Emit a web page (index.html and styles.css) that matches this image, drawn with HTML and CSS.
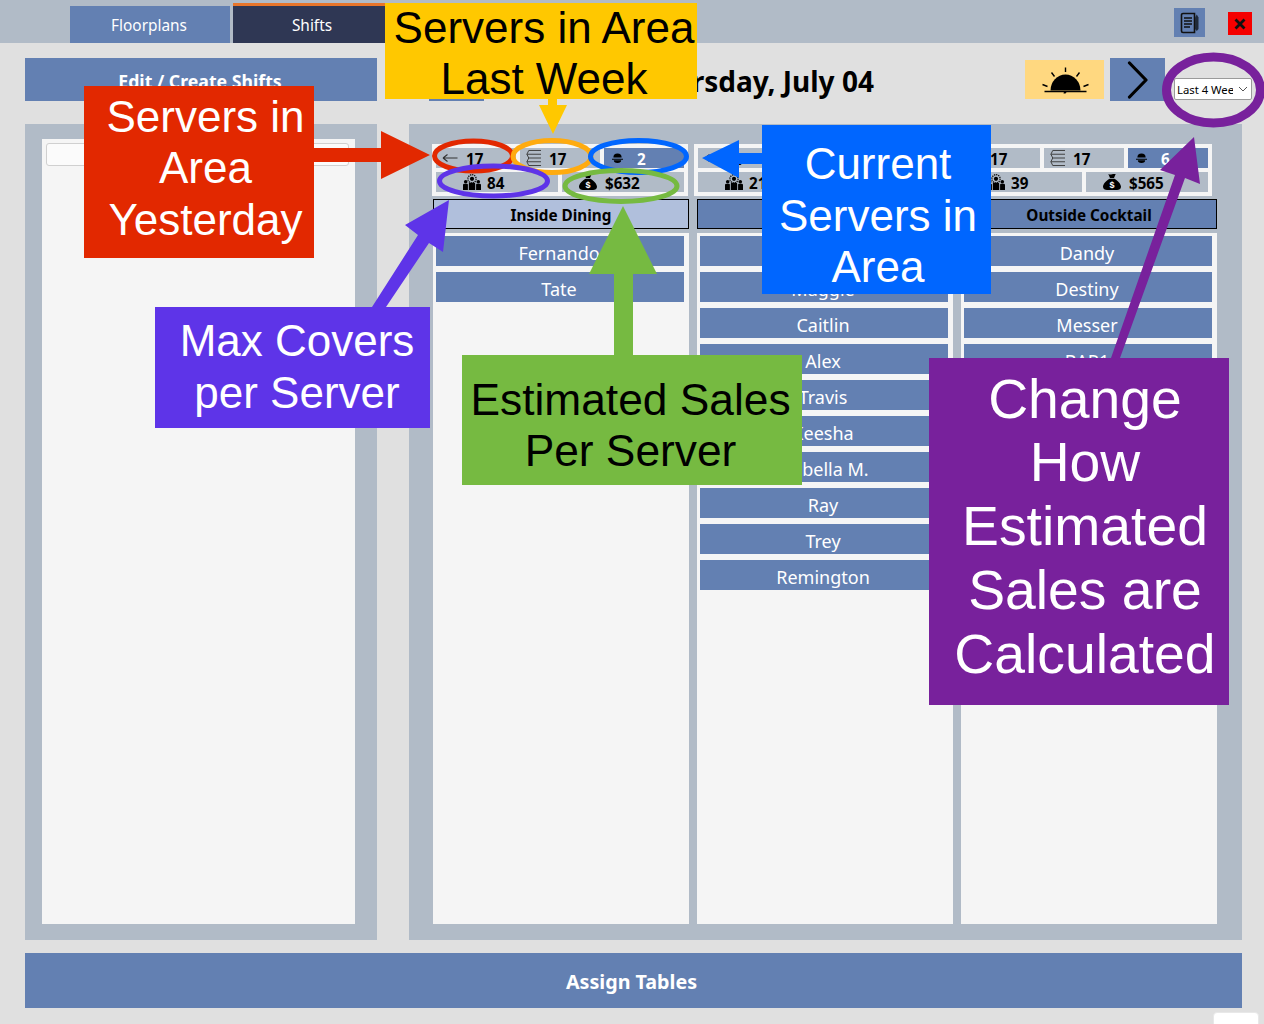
FILE: index.html
```html
<!DOCTYPE html>
<html lang="en">
<head>
<meta charset="utf-8">
<title>Shifts</title>
<link rel="stylesheet" href="styles.css">
</head>
<body>
<svg class="sprite" aria-hidden="true">
  <symbol id="i-back" viewBox="0 0 16 14"><path d="M15.500 7H1M1 7l4.500-3.500M1 7l4.500 3.500" fill="none" stroke="#333" stroke-width="1.100"/></symbol>
  <symbol id="i-list" viewBox="0 0 17 18"><path d="M4 1h13M2 5h15M4 9h13M2 13h15M4 17h13M4 1 2 5l2 4-2 4 2 4" fill="none" stroke="#3a3a3a" stroke-width="1"/></symbol>
  <symbol id="i-cloche" viewBox="0 0 12 12"><path d="M1.500 5a4.500 4.500 0 0 1 9 0zM0 6.300h12v1H0zM2 8h8a4 3 0 0 1-8 0z" fill="#000"/></symbol>
  <symbol id="i-people" viewBox="0 0 18 16"><circle cx="9" cy="4.800" r="4.100" fill="none" stroke="#111" stroke-width="1.300" stroke-dasharray="1.300 .8"/><circle cx="9" cy="4.800" r="2.100"/><circle cx="2.700" cy="7.700" r="1.800"/><circle cx="15.300" cy="7.700" r="1.800"/><path d="M0 16v-5q0-1.300 1.300-1.300h2.800q.8 0 .8 1V16zM13.100 16v-5.300q0-1 .8-1h2.800q1.300 0 1.300 1.300v5zM5.800 16V9.800q0-1 1-1h4.400q1 0 1 1V16z"/></symbol>
  <symbol id="i-bag" viewBox="0 0 18 16"><path d="M5.300 0q1.800.9 3.700.3t3.700-.3L11 4H7zM6.600 4.800h4.800C15 7 18 10 18 12.800 18 15.300 16 16 14 16H4C2 16 0 15.300 0 12.800 0 10 3 7 6.600 4.800z"/><text x="9" y="14" class="bag-sign">$</text></symbol>
</svg>

<div class="page">
  <header class="topbar">
    <nav class="tabs">
      <a class="tab">Floorplans</a>
      <a class="tab tab-active">Shifts</a>
    </nav>
    <div class="top-actions">
      <button class="note-btn" aria-label="Notes">
        <svg width="20" height="22" viewBox="0 0 20 22"><path d="M3 1.500h11.500v19H3A1.500 1.500 0 0 1 1.500 19V3A1.500 1.500 0 0 1 3 1.500z" fill="none" stroke="#111" stroke-width="1.600"/><path d="M4 6h8M4 9h8M4 12h8M4 15h6" stroke="#111" stroke-width="1.500"/><path d="M15 5.500 16.800 2.500l1.700 3V17l-1.700 2-1.800-2z" fill="#1f2a3a"/></svg>
      </button>
      <button class="close-btn" aria-label="Close">
        <svg width="12" height="12" viewBox="0 0 12 12"><path d="M1.500 1.500l9 9M10.500 1.500l-9 9" stroke="#111" stroke-width="2.800"/></svg>
      </button>
    </div>
  </header>

  <section class="toolbar">
    <button class="edit-btn"><span>Edit / Create Shifts</span></button>
    <button class="nav-btn nav-prev" aria-label="Previous day"></button>
    <h1 class="date">Thursday, July 04</h1>
    <button class="sun-btn" aria-label="Day part">
      <svg width="48" height="28" viewBox="0 0 48 28"><path d="M9.500 24.500a15 16 0 0 1 30 0z" fill="#000"/><path d="M3.500 25.500h42" stroke="#000" stroke-width="1.300"/><path d="M23 25.500h3l-1.500 2h-2z" fill="#000"/><path d="M24.500 1.500V6M10.500 6.500l3 4M38.500 6.500l-3 4M1.500 18.500l5 2M47.500 18.500l-5 2" stroke="#000" stroke-width="1.400"/></svg>
    </button>
    <button class="nav-btn nav-next" aria-label="Next day">
      <svg width="24" height="38" viewBox="0 0 24 38"><path d="M3.500 2 20 19 3.500 36" fill="none" stroke="#000" stroke-width="3.200" stroke-linecap="round" stroke-linejoin="round"/></svg>
    </button>
    <div class="range-select">
      <span class="range-text">Last 4 Weeks</span>
      <svg width="10" height="6" viewBox="0 0 10 6"><path d="M1 1l4 4 4-4" fill="none" stroke="#555"/></svg>
    </div>
  </section>

  <main class="workspace">
    <aside class="side-panel">
      <div class="side-inner">
        <div class="search-box"></div>
      </div>
    </aside>

    <section class="area-panel">
      <div class="stats-row">
        <div class="stats">
          <div class="stat-line">
            <div class="stat stat-back"><svg class="ic-back"><use href="#i-back"/></svg><b>17</b></div>
            <div class="stat stat-list"><svg class="ic-list"><use href="#i-list"/></svg><b>17</b></div>
            <div class="stat stat-now"><svg class="ic-cloche"><use href="#i-cloche"/></svg><b>2</b></div>
          </div>
          <div class="stat-line">
            <div class="stat stat-covers"><svg class="ic-people"><use href="#i-people"/></svg><b>84</b></div>
            <div class="stat stat-sales"><svg class="ic-bag"><use href="#i-bag"/></svg><b>$632</b></div>
          </div>
        </div>
        <div class="stats">
          <div class="stat-line">
            <div class="stat stat-back"><svg class="ic-back"><use href="#i-back"/></svg><b>17</b></div>
            <div class="stat stat-list"><svg class="ic-list"><use href="#i-list"/></svg><b>17</b></div>
            <div class="stat stat-now"><svg class="ic-cloche"><use href="#i-cloche"/></svg><b>9</b></div>
          </div>
          <div class="stat-line">
            <div class="stat stat-covers"><svg class="ic-people"><use href="#i-people"/></svg><b>210</b></div>
            <div class="stat stat-sales"><svg class="ic-bag"><use href="#i-bag"/></svg><b>$1580</b></div>
          </div>
        </div>
        <div class="stats">
          <div class="stat-line">
            <div class="stat stat-back"><svg class="ic-back"><use href="#i-back"/></svg><b>17</b></div>
            <div class="stat stat-list"><svg class="ic-list"><use href="#i-list"/></svg><b>17</b></div>
            <div class="stat stat-now"><svg class="ic-cloche"><use href="#i-cloche"/></svg><b>6</b></div>
          </div>
          <div class="stat-line">
            <div class="stat stat-covers"><svg class="ic-people"><use href="#i-people"/></svg><b>39</b></div>
            <div class="stat stat-sales"><svg class="ic-bag"><use href="#i-bag"/></svg><b>$565</b></div>
          </div>
        </div>
      </div>

      <div class="columns">
        <div class="column">
          <h2 class="col-head col-head-active"><span>Inside Dining</span></h2>
          <ul class="servers">
            <li>Fernando</li>
            <li>Tate</li>
          </ul>
        </div>
        <div class="column">
          <h2 class="col-head"><span>Main Bar</span></h2>
          <ul class="servers">
            <li>Jordan</li>
            <li>Maggie</li>
            <li>Caitlin</li>
            <li>Alex</li>
            <li>Travis</li>
            <li>Keesha</li>
            <li>Isabella M.</li>
            <li>Ray</li>
            <li>Trey</li>
            <li>Remington</li>
          </ul>
        </div>
        <div class="column">
          <h2 class="col-head"><span>Outside Cocktail</span></h2>
          <ul class="servers">
            <li>Dandy</li>
            <li>Destiny</li>
            <li>Messer</li>
            <li>BAR1</li>
          </ul>
        </div>
      </div>
    </section>
  </main>

  <footer class="footer">
    <button class="assign-btn">Assign Tables</button>
  </footer>
  <div class="corner-tab"></div>
</div>

<svg class="arrows" width="1264" height="1024" viewBox="0 0 1264 1024" aria-hidden="true">
  <polygon fill="#E22800" points="314,148 381,148 381,131 430,155 381,179 381,162 314,162"/>
  <polygon fill="#FFC800" points="548,99 557,99 557,105 567,105 553,134 539,105 548,105"/>
  <polygon fill="#0066FF" points="762,153 739,153 739,140 702,158 739,178 739,164 762,164"/>
  <polygon fill="#76BA41" points="614,355 614,274 589,274 623,206 657,274 633,274 633,355"/>
  <polygon fill="#5E34E8" points="372,307 418,235 405,225 449,200 443,252 429,243 386,307"/>
  <polygon fill="#78219C" points="1111,358 1175,175 1160,170 1194,137 1200,184 1185,178 1120,358"/>
  <g fill="none">
    <ellipse cx="473.500" cy="156" rx="39" ry="15" stroke="#E22800" stroke-width="5"/>
    <ellipse cx="552" cy="156.500" rx="39" ry="16" stroke="#FFAB0F" stroke-width="5"/>
    <ellipse cx="638.500" cy="156.500" rx="48" ry="16" stroke="#0066FF" stroke-width="5"/>
    <ellipse cx="493.500" cy="181" rx="54" ry="15" stroke="#5E34E8" stroke-width="5"/>
    <ellipse cx="621" cy="186" rx="56" ry="15.500" stroke="#76BA41" stroke-width="5"/>
    <ellipse cx="1213.500" cy="90" rx="47" ry="33" stroke="#78219C" stroke-width="9"/>
  </g>
</svg>

<div class="note note-yellow">Servers in Area<br>Last Week</div>
<div class="note note-red">Servers in<br>Area<br>Yesterday</div>
<div class="note note-blue">Current<br>Servers in<br>Area</div>
<div class="note note-violet">Max Covers<br>per Server</div>
<div class="note note-green">Estimated Sales<br>Per Server</div>
<div class="note note-purple">Change<br>How<br>Estimated<br>Sales are<br>Calculated</div>
</body>
</html>
```

FILE: styles.css
```css
* { box-sizing: border-box; }

html, body {
  margin: 0;
  padding: 0;
  height: 1024px;
  overflow: hidden;
}

body {
  position: relative;
  background: #e0e0e0;
  font-family: "Noto Sans", "Open Sans", "Liberation Sans", sans-serif;
  color: #000;
}

button {
  border: 0;
  padding: 0;
  font: inherit;
  color: inherit;
  cursor: pointer;
}

.sprite { display: none; }

.page {
  display: flex;
  flex-direction: column;
  height: 1024px;
}

/* top bar */
.topbar {
  display: flex;
  justify-content: space-between;
  height: 43px;
  padding: 3px 12px 0 70px;
  background: #b1bbc7;
  flex: none;
}

.tabs {
  display: flex;
  gap: 3px;
  align-items: flex-end;
}

.tab {
  display: flex;
  align-items: center;
  justify-content: center;
  width: 160px;
  height: 37px;
  padding: 2px 2px 0 0;
  background: #6380b2;
  color: #fff;
  font-size: 15.400px;
}

.tab-active {
  height: 40px;
  background: #2f3754;
  border-top: 3px solid #e8752a;
}

.top-actions {
  display: flex;
  align-items: flex-start;
  gap: 23px;
}

.note-btn {
  display: flex;
  align-items: center;
  justify-content: center;
  width: 31px;
  height: 29px;
  margin-top: 5px;
  background: #6380b2;
}

.close-btn {
  display: flex;
  align-items: center;
  justify-content: center;
  width: 24px;
  height: 23px;
  margin-top: 9px;
  background: #f50000;
}

/* toolbar */
.toolbar {
  display: flex;
  align-items: center;
  height: 43px;
  margin: 15px 12px 0 25px;
  flex: none;
}

.edit-btn {
  width: 352px;
  height: 43px;
  padding: 2px 2px 0 0;
  background: #6380b2;
  color: #fff;
  font-size: 17.700px;
  font-weight: 700;
}

.nav-btn {
  display: flex;
  align-items: center;
  justify-content: center;
  width: 55px;
  height: 43px;
  background: #6380b2;
}

.nav-prev { margin-left: 52px; }

.date {
  flex: 1;
  margin: 0;
  padding: 2px 0 0 4px;
  text-align: center;
  font-size: 28px;
  font-weight: 700;
  line-height: 48px;
}

.sun-btn {
  display: flex;
  align-items: center;
  justify-content: center;
  width: 79px;
  height: 39px;
  margin-right: 6px;
  background: #ffd880;
}

.range-select {
  display: flex;
  align-items: center;
  justify-content: space-between;
  width: 78px;
  height: 22px;
  margin: 19px 0 0 9px;
  padding: 0 3px 0 2px;
  background: #fff;
  border: 1px solid #9a9a9a;
  border-radius: 2px;
}

.range-text {
  width: 56px;
  overflow: hidden;
  white-space: nowrap;
  font-size: 11.300px;
}

/* work area */
.workspace {
  display: flex;
  gap: 32px;
  height: 816px;
  margin: 23px 22px 0 25px;
  flex: none;
}

.side-panel {
  width: 352px;
  padding: 15px 22px 16px 17px;
  background: #b1bbc7;
}

.side-inner {
  height: 100%;
  padding: 4px 6px 0 4px;
  background: #f5f5f5;
}

.search-box {
  height: 23px;
  background: #fbfbfb;
  border: 1px solid #d0d0d0;
  border-radius: 3px;
}

.area-panel {
  display: flex;
  flex-direction: column;
  flex: 1;
  padding: 20px 0 16px 23px;
  background: #b1bbc7;
}

.stats-row {
  display: flex;
  gap: 6px;
  flex: none;
}

.stats {
  display: flex;
  flex-direction: column;
  gap: 4px;
  width: 256px;
  height: 52px;
  padding: 4px;
  background: #f5f5f5;
}

.stat-line {
  display: flex;
  gap: 4px;
  height: 20px;
}

.stat {
  display: flex;
  flex: 1 1 60px;
  align-items: center;
  height: 20px;
  background: #b1bbc7;
  font-size: 15.200px;
  line-height: 20px;
}

.stat b {
  font-weight: 700;
  padding-top: 2px;
}

.stat-back { padding-left: 6px; gap: 8px; }
.stat-list { padding-left: 5px; gap: 8px; }
.stat-now { padding-left: 8px; gap: 14px; background: #6380b2; color: #fff; }
.stat-covers { padding-left: 27px; gap: 6px; }
.stat-sales { padding-left: 17px; gap: 8px; }

.ic-back { width: 16px; height: 14px; }
.ic-list { width: 16px; height: 18px; }
.ic-cloche { width: 11px; height: 11px; }
.ic-people { width: 18px; height: 16px; }
.ic-bag { width: 18px; height: 16px; }

.bag-sign {
  font-family: "Liberation Sans", sans-serif;
  font-size: 9px;
  font-weight: 700;
  text-anchor: middle;
  fill: #fff;
}

.columns {
  display: flex;
  flex: 1;
  gap: 8px;
  min-height: 0;
  margin: 3px 0 0 1px;
}

.column {
  display: flex;
  flex-direction: column;
  gap: 4px;
  width: 256px;
}

.col-head {
  height: 30px;
  margin: 0;
  overflow: hidden;
  background: #6380b2;
  border: 1px solid #000;
  text-align: center;
  font-size: 15.300px;
  font-weight: 700;
  line-height: 30px;
}

.col-head-active { background: #b0bfdc; }

.servers {
  display: flex;
  flex-direction: column;
  flex: 1;
  gap: 6px;
  margin: 0;
  padding: 3px 5px 0 3px;
  list-style: none;
  background: #f5f5f5;
}

.servers li {
  height: 30px;
  padding-right: 2px;
  overflow: hidden;
  background: #6380b2;
  color: #fff;
  text-align: center;
  font-size: 18px;
  line-height: 34px;
}

/* footer */
.footer {
  margin: 13px 22px 0 25px;
  flex: none;
}

.assign-btn {
  display: block;
  width: 100%;
  height: 55px;
  padding: 1px 4px 0 0;
  background: #6380b2;
  color: #fff;
  font-size: 19.700px;
  font-weight: 700;
}

.corner-tab {
  position: absolute;
  left: 1213px;
  top: 1012px;
  width: 46px;
  height: 20px;
  background: #fff;
  border: 1px solid #e8e8e8;
  border-radius: 4px 4px 0 0;
}

/* annotations laid over the screenshot */
.arrows {
  position: absolute;
  left: 0;
  top: 0;
  pointer-events: none;
}

.note {
  position: absolute;
  display: flex;
  align-items: center;
  justify-content: center;
  text-align: center;
  font-family: "Liberation Sans", Arial, sans-serif;
  font-size: 44px;
  line-height: 51.500px;
  color: #fff;
}

.note-yellow { left: 385px; top: 3px; width: 312px; height: 96px; padding: 4px 0 0 6px; background: #ffc800; color: #000; }
.note-red { left: 84px; top: 86px; width: 230px; height: 172px; padding: 0 0 8px 13px; background: #e22800; }
.note-blue { left: 762px; top: 125px; width: 229px; height: 169px; padding: 12px 0 0 3px; background: #0066ff; }
.note-violet { left: 155px; top: 307px; width: 275px; height: 121px; padding: 0 0 2px 9px; background: #5e34e8; }
.note-green { left: 462px; top: 355px; width: 340px; height: 130px; padding: 10px 3px 0 0; background: #76ba41; color: #000; font-size: 44.300px; }
.note-purple { left: 929px; top: 358px; width: 300px; height: 347px; padding: 0 0 9px 12px; background: #78219c; font-size: 55.300px; line-height: 63.750px; }
```
